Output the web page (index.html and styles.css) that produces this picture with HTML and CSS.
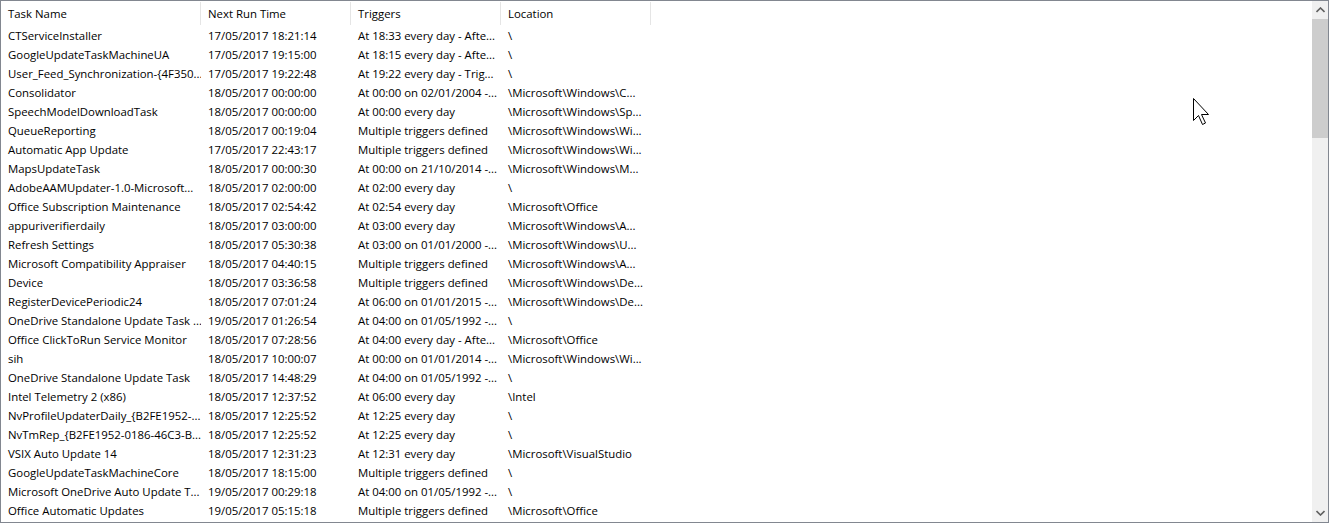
FILE: index.html
```html
<!DOCTYPE html>
<html>
<head>
<meta charset="utf-8">
<link rel="stylesheet" href="styles.css">
</head>
<body>
<div class="frame">
  <div class="list">
    <div class="row head">
      <div class="hcell">Task Name</div>
      <div class="hcell">Next Run Time</div>
      <div class="hcell">Triggers</div>
      <div class="hcell">Location</div>
    </div>
    <div class="row"><div class="cell">CTServiceInstaller</div><div class="cell">17/05/2017 18:21:14</div><div class="cell">At 18:33 every day - Afte...</div><div class="cell">\</div></div>
    <div class="row"><div class="cell">GoogleUpdateTaskMachineUA</div><div class="cell">17/05/2017 19:15:00</div><div class="cell">At 18:15 every day - Afte...</div><div class="cell">\</div></div>
    <div class="row"><div class="cell">User_Feed_Synchronization-{4F350...</div><div class="cell">17/05/2017 19:22:48</div><div class="cell">At 19:22 every day - Trig...</div><div class="cell">\</div></div>
    <div class="row"><div class="cell">Consolidator</div><div class="cell">18/05/2017 00:00:00</div><div class="cell">At 00:00 on 02/01/2004 -...</div><div class="cell">\Microsoft\Windows\C...</div></div>
    <div class="row"><div class="cell">SpeechModelDownloadTask</div><div class="cell">18/05/2017 00:00:00</div><div class="cell">At 00:00 every day</div><div class="cell">\Microsoft\Windows\Sp...</div></div>
    <div class="row"><div class="cell">QueueReporting</div><div class="cell">18/05/2017 00:19:04</div><div class="cell">Multiple triggers defined</div><div class="cell">\Microsoft\Windows\Wi...</div></div>
    <div class="row"><div class="cell">Automatic App Update</div><div class="cell">17/05/2017 22:43:17</div><div class="cell">Multiple triggers defined</div><div class="cell">\Microsoft\Windows\Wi...</div></div>
    <div class="row"><div class="cell">MapsUpdateTask</div><div class="cell">18/05/2017 00:00:30</div><div class="cell">At 00:00 on 21/10/2014 -...</div><div class="cell">\Microsoft\Windows\M...</div></div>
    <div class="row"><div class="cell">AdobeAAMUpdater-1.0-Microsoft...</div><div class="cell">18/05/2017 02:00:00</div><div class="cell">At 02:00 every day</div><div class="cell">\</div></div>
    <div class="row"><div class="cell">Office Subscription Maintenance</div><div class="cell">18/05/2017 02:54:42</div><div class="cell">At 02:54 every day</div><div class="cell">\Microsoft\Office</div></div>
    <div class="row"><div class="cell">appuriverifierdaily</div><div class="cell">18/05/2017 03:00:00</div><div class="cell">At 03:00 every day</div><div class="cell">\Microsoft\Windows\A...</div></div>
    <div class="row"><div class="cell">Refresh Settings</div><div class="cell">18/05/2017 05:30:38</div><div class="cell">At 03:00 on 01/01/2000 -...</div><div class="cell">\Microsoft\Windows\U...</div></div>
    <div class="row"><div class="cell">Microsoft Compatibility Appraiser</div><div class="cell">18/05/2017 04:40:15</div><div class="cell">Multiple triggers defined</div><div class="cell">\Microsoft\Windows\A...</div></div>
    <div class="row"><div class="cell">Device</div><div class="cell">18/05/2017 03:36:58</div><div class="cell">Multiple triggers defined</div><div class="cell">\Microsoft\Windows\De...</div></div>
    <div class="row"><div class="cell">RegisterDevicePeriodic24</div><div class="cell">18/05/2017 07:01:24</div><div class="cell">At 06:00 on 01/01/2015 -...</div><div class="cell">\Microsoft\Windows\De...</div></div>
    <div class="row"><div class="cell">OneDrive Standalone Update Task ...</div><div class="cell">19/05/2017 01:26:54</div><div class="cell">At 04:00 on 01/05/1992 -...</div><div class="cell">\</div></div>
    <div class="row"><div class="cell">Office ClickToRun Service Monitor</div><div class="cell">18/05/2017 07:28:56</div><div class="cell">At 04:00 every day - Afte...</div><div class="cell">\Microsoft\Office</div></div>
    <div class="row"><div class="cell">sih</div><div class="cell">18/05/2017 10:00:07</div><div class="cell">At 00:00 on 01/01/2014 -...</div><div class="cell">\Microsoft\Windows\Wi...</div></div>
    <div class="row"><div class="cell">OneDrive Standalone Update Task</div><div class="cell">18/05/2017 14:48:29</div><div class="cell">At 04:00 on 01/05/1992 -...</div><div class="cell">\</div></div>
    <div class="row"><div class="cell">Intel Telemetry 2 (x86)</div><div class="cell">18/05/2017 12:37:52</div><div class="cell">At 06:00 every day</div><div class="cell">\Intel</div></div>
    <div class="row"><div class="cell">NvProfileUpdaterDaily_{B2FE1952-...</div><div class="cell">18/05/2017 12:25:52</div><div class="cell">At 12:25 every day</div><div class="cell">\</div></div>
    <div class="row"><div class="cell">NvTmRep_{B2FE1952-0186-46C3-B...</div><div class="cell">18/05/2017 12:25:52</div><div class="cell">At 12:25 every day</div><div class="cell">\</div></div>
    <div class="row"><div class="cell">VSIX Auto Update 14</div><div class="cell">18/05/2017 12:31:23</div><div class="cell">At 12:31 every day</div><div class="cell">\Microsoft\VisualStudio</div></div>
    <div class="row"><div class="cell">GoogleUpdateTaskMachineCore</div><div class="cell">18/05/2017 18:15:00</div><div class="cell">Multiple triggers defined</div><div class="cell">\</div></div>
    <div class="row"><div class="cell">Microsoft OneDrive Auto Update T...</div><div class="cell">19/05/2017 00:29:18</div><div class="cell">At 04:00 on 01/05/1992 -...</div><div class="cell">\</div></div>
    <div class="row"><div class="cell">Office Automatic Updates</div><div class="cell">19/05/2017 05:15:18</div><div class="cell">Multiple triggers defined</div><div class="cell">\Microsoft\Office</div></div>
  </div>
  <div class="scrollbar">
    <div class="sbtn">
      <svg width="9" height="6" viewBox="0 0 9 6"><path d="M0.5 5 L4.5 1 L8.5 5" fill="none" stroke="#606060" stroke-width="1.6"/></svg>
    </div>
    <div class="track"><div class="thumb"></div></div>
    <div class="sbtn">
      <svg width="9" height="6" viewBox="0 0 9 6"><path d="M0.5 1 L4.5 5 L8.5 1" fill="none" stroke="#606060" stroke-width="1.6"/></svg>
    </div>
  </div>
  <svg class="cursor" width="20" height="28" viewBox="0 0 20 28"><path d="M0.5 0.5 L0.5 22.5 L5.5 17.5 L9.5 26.5 L12.5 25 L8.5 16.5 L15.5 16.5 Z" fill="#fff" stroke="#000" stroke-width="1" stroke-linejoin="miter"/></svg>
</div>
</body>
</html>
```
FILE: styles.css
```css
html, body {
  margin: 0;
  padding: 0;
  background: #fff;
}
.frame {
  position: relative;
  width: 1329px;
  height: 523px;
  box-sizing: border-box;
  border: 1px solid #828790;
  display: flex;
  background: #fff;
  overflow: hidden;
  font-family: "Open Sans", "Noto Sans", sans-serif;
  font-size: 11.4px;
  color: #000;
}
.list {
  flex: 1;
  display: flex;
  flex-direction: column;
  overflow: hidden;
}
.row {
  display: grid;
  grid-template-columns: 200px 150px 150px 150px;
  height: 19px;
  flex: none;
}
.row.head {
  height: 25px;
}
.hcell {
  padding-left: 7px;
  border-right: 1px solid #e5e5e5;
  margin-top: 1px;
  height: 23px;
  line-height: 24px;
  white-space: nowrap;
  overflow: hidden;
}
.cell {
  padding-left: 7px;
  padding-top: 1px;
  line-height: 18px;
  white-space: nowrap;
  overflow: hidden;
}
.scrollbar {
  width: 16px;
  flex: none;
  background: #f0f0f0;
  display: flex;
  flex-direction: column;
}
.sbtn {
  height: 18px;
  display: flex;
  align-items: center;
  justify-content: center;
  flex: none;
}
.track {
  flex: 1;
}
.thumb {
  height: 119px;
  background: #cdcdcd;
}
.cursor {
  position: absolute;
  left: 1192px;
  top: 97px;
}
```
